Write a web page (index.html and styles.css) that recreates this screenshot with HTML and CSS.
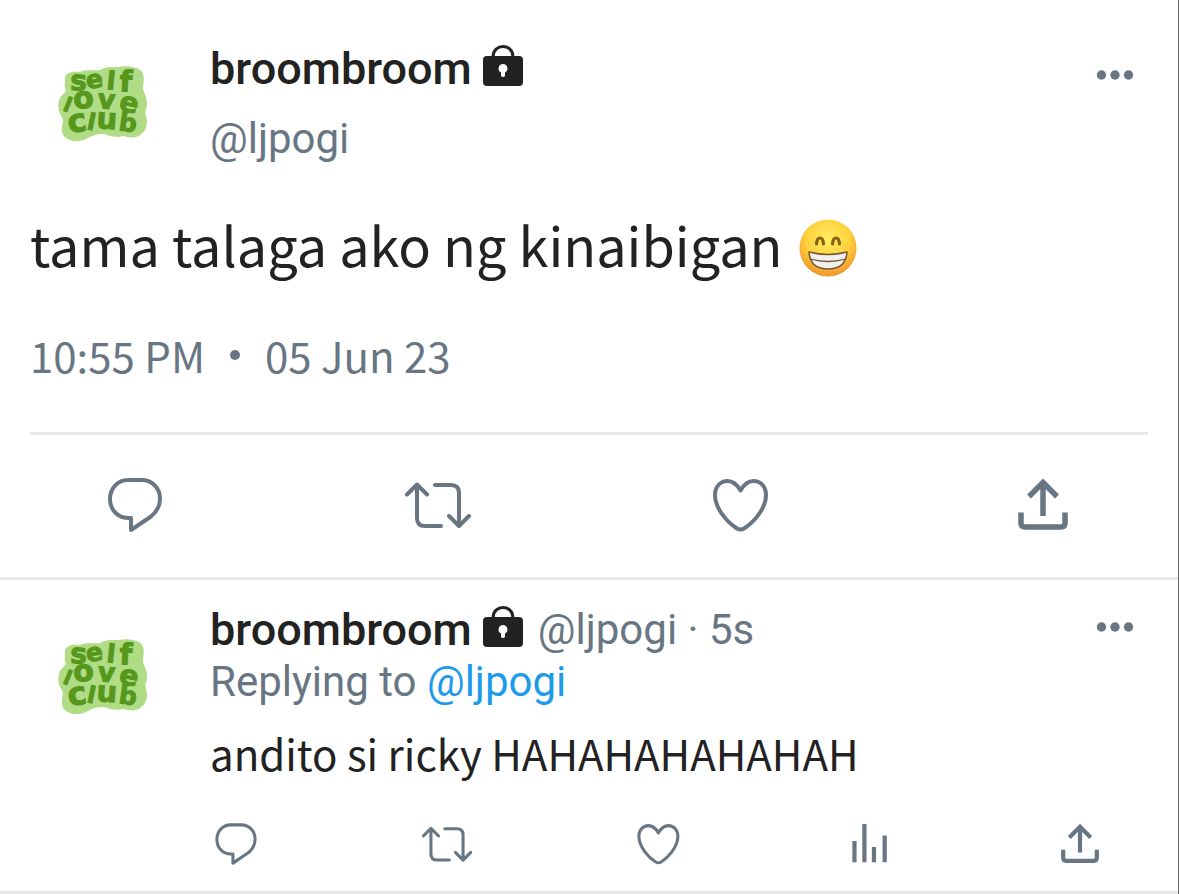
FILE: index.html
```html
<!DOCTYPE html>
<html lang="tl">
<head>
    <meta charset="UTF-8">
    <meta name="viewport" content="width=device-width, initial-scale=1.0">
    <title>broombroom</title>
    <link rel="stylesheet" href="styles.css">
</head>
<body>
    <!-- Shared icons -->
    <svg class="sprite" aria-hidden="true">
        <symbol id="reply" viewBox="0 0 68 60">
            <path d="M27 5H41C51 5 59 13 59 23.5C59 31 55.5 37 50 41.5L30 55V43H27C16.5 43 9 34.5 9 24S16.5 5 27 5Z"/>
        </symbol>
        <symbol id="retweet" viewBox="0 0 68 60">
            <path stroke-linecap="round" d="M3 19.5L13 9.5L23 19.5M13 10V43Q13 51 21 51H37M31 10H47Q55 10 55 18V51M45 41L55 51L65 41"/>
        </symbol>
        <symbol id="heart" viewBox="0 0 68 60">
            <path d="M34.5 15.5C31 9.5 27 6 21.5 6C14 6 9 12 9 20C9 34 22 48 31 53.5Q34.5 55.5 38 53.5C47 48 60 34 60 20C60 12 55 6 47.5 6C42 6 38 9.5 34.5 15.5Z"/>
        </symbol>
        <symbol id="stats" viewBox="0 0 68 60">
            <path stroke-width="5.5" d="M15 26V54M28 4V54M40.5 34V54M54.5 19V54"/>
        </symbol>
        <symbol id="share" viewBox="0 0 68 60">
            <path stroke-width="5.5" stroke-linejoin="miter" d="M20 21.5L34 7.5L48 21.5M34 8V41M12 37.5V48Q12 52 16 52H52Q56 52 56 48V37.5"/>
        </symbol>
        <symbol id="lock" viewBox="0 0 40 42">
            <rect x="0" y="11" width="40" height="30" rx="4"/>
            <path fill="none" stroke="#222" stroke-width="3" d="M10 12C10 -2 30 -2 30 12"/>
            <path fill="#fff" d="M20 19A4.5 4.5 0 0 1 22 27.5V31Q20 33 18 31V27.5A4.5 4.5 0 0 1 20 19Z"/>
        </symbol>
        <symbol id="dots" viewBox="0 0 38 12">
            <circle cx="5.5" cy="6" r="4.7"/>
            <circle cx="19" cy="6" r="4.7"/>
            <circle cx="32.5" cy="6" r="4.7"/>
        </symbol>
        <symbol id="logo" viewBox="0 0 90 76">
            <path fill="#afdc85" d="M7 15C6 6 14 5 22 6C28 3 38 5 42 4C48 0 56 1 61 1C68 -1 77 1 81 3C87 7 86 14 85 20C84 25 89 29 89 38C89 43 86 45 88 50C91 59 87 66 82 69C77 73 70 71 65 70C57 72 51 70 46 68C38 68 33 70 28 73C20 77 10 75 6 70C2 65 5 58 5 53C2 48 -1 44 1 35C2 29 8 27 8 24C6 21 7 18 7 15Z"/>
            <g class="logo-text">
                <text x="12" y="24" rotate="2" font-size="28">s</text>
                <text x="29" y="23" rotate="-8" font-size="25">e</text>
                <text x="48" y="23" rotate="6" font-size="25">l</text>
                <text x="61" y="25" rotate="3" font-size="29">f</text>
                <text x="4" y="44" rotate="22" font-size="20">l</text>
                <text x="16" y="43" rotate="-5" font-size="30">o</text>
                <text x="39" y="42" rotate="5" font-size="27">v</text>
                <text x="60" y="44" rotate="12" font-size="28">e</text>
                <text x="11" y="67" rotate="-8" font-size="32">c</text>
                <text x="28" y="63" rotate="12" font-size="23">l</text>
                <text x="38" y="62" rotate="4" font-size="29">u</text>
                <text x="60" y="64" rotate="8" font-size="25">b</text>
            </g>
        </symbol>
    </svg>

    <main class="page">
        <article class="tweet">
            <header class="tweet-header">
                <svg class="avatar" role="img" aria-label="self love club"><use href="#logo"/></svg>
                <div class="user">
                    <h1 class="name">broombroom <svg class="lock" aria-hidden="true"><use href="#lock"/></svg></h1>
                    <p class="handle">@ljpogi</p>
                </div>
                <button class="more" type="button" aria-label="More"><svg><use href="#dots"/></svg></button>
            </header>
            <p class="tweet-text">tama talaga ako ng kinaibigan
                <svg class="emoji" viewBox="0 0 60 60" role="img" aria-label="grinning face">
                    <defs>
                        <radialGradient id="face" cx="50%" cy="35%" r="65%">
                            <stop offset="0" stop-color="#ffee62"/>
                            <stop offset="0.6" stop-color="#fed03c"/>
                            <stop offset="1" stop-color="#f0932b"/>
                        </radialGradient>
                    </defs>
                    <circle cx="30" cy="30" r="28.5" fill="url(#face)"/>
                    <path fill="none" stroke="#8a6216" stroke-width="3.2" stroke-linecap="round" d="M18.5 26Q19 20 22 20T25.5 26M34.5 26Q35 20 38 20T41.5 26"/>
                    <path fill="#f1f1f1" stroke="#76562b" stroke-width="1.5" stroke-linejoin="round" d="M11 34Q30 39 49 34Q48 51 30 51T11 34Z"/>
                    <path fill="none" stroke="#76562b" stroke-width="1.3" d="M12.5 41Q30 46 47.5 41"/>
                </svg>
            </p>
            <p class="tweet-date"><span>10:55 PM</span><span class="bullet"></span><span>05 Jun 23</span></p>
            <div class="actions">
                <button type="button" aria-label="Reply"><svg><use href="#reply"/></svg></button>
                <button type="button" aria-label="Retweet"><svg><use href="#retweet"/></svg></button>
                <button type="button" aria-label="Like"><svg><use href="#heart"/></svg></button>
                <button type="button" aria-label="Share"><svg><use href="#share"/></svg></button>
            </div>
        </article>

        <article class="reply">
            <svg class="avatar" role="img" aria-label="self love club"><use href="#logo"/></svg>
            <div class="reply-body">
                <div class="reply-top">
                    <h2 class="name">broombroom <svg class="lock" aria-hidden="true"><use href="#lock"/></svg></h2>
                    <span class="handle">@ljpogi · 5s</span>
                    <button class="more" type="button" aria-label="More"><svg><use href="#dots"/></svg></button>
                </div>
                <p class="replying">Replying to <a href="#">@ljpogi</a></p>
                <p class="reply-text">andito si ricky HAHAHAHAHAHAH</p>
                <div class="actions actions-small">
                    <button type="button" aria-label="Reply"><svg><use href="#reply"/></svg></button>
                    <button type="button" aria-label="Retweet"><svg><use href="#retweet"/></svg></button>
                    <button type="button" aria-label="Like"><svg><use href="#heart"/></svg></button>
                    <button type="button" aria-label="Stats"><svg><use href="#stats"/></svg></button>
                    <button type="button" aria-label="Share"><svg><use href="#share"/></svg></button>
                </div>
            </div>
        </article>
    </main>
</body>
</html>
```

FILE: styles.css
```css
* {
    box-sizing: border-box;
}

body {
    margin: 0;
    background: #fff;
    color: #222;
    font-family: Roboto, sans-serif;
}

h1, h2, p {
    margin: 0;
}

button {
    display: flex;
    padding: 0;
    border: none;
    background: none;
    cursor: pointer;
}

.sprite {
    display: none;
}

.page {
    min-height: 100vh;
    border-right: 1px solid #666;
}

.avatar {
    flex: none;
    width: 90px;
    height: 76px;
    margin: 0 62px 0 28px;
}

.logo-text {
    fill: #55981c;
    stroke: #55981c;
    stroke-width: 1px;
    font-family: "DejaVu Sans", sans-serif;
    font-weight: 700;
}

.tweet {
    padding-top: 44px;
    border-bottom: 3px solid #e8e8e8;
}

.tweet-header {
    display: flex;
    align-items: flex-start;
    padding: 0 44px 0 30px;
}

.tweet-header .avatar {
    margin-top: 22px;
}

.user {
    flex: 1;
}

.name {
    display: flex;
    align-items: center;
    gap: 11px;
    font-size: 45px;
    font-weight: 500;
    line-height: 50px;
}

.lock {
    width: 40px;
    height: 42px;
    margin-bottom: 7px;
    fill: #222;
}

.handle {
    color: #687684;
    font-size: 42px;
    line-height: 50px;
}

.user .handle {
    margin-top: 20px;
}

.more svg {
    width: 38px;
    height: 12px;
    fill: #687684;
}

.tweet-header .more {
    margin-top: 25px;
}

.tweet-text {
    display: flex;
    align-items: flex-start;
    gap: 15px;
    padding: 0 30px;
    margin-top: 44px;
    font-family: "Noto Sans CJK SC", sans-serif;
    font-size: 54px;
    line-height: 72px;
}

.emoji {
    width: 60px;
    height: 60px;
    margin-top: 10px;
}

.tweet-date {
    display: flex;
    align-items: center;
    gap: 25px;
    margin: 45px 30px 0;
    padding-bottom: 47px;
    border-bottom: 3px solid #e8e8e8;
    color: #687684;
    font-family: "Noto Sans CJK SC", sans-serif;
    font-size: 42px;
    line-height: 60px;
}

.bullet {
    width: 10px;
    height: 10px;
    border-radius: 50%;
    background: #687684;
}

.actions {
    display: flex;
    justify-content: space-between;
    padding: 40px 101px 42px;
}

.actions svg {
    width: 68px;
    height: 60px;
    fill: none;
    stroke: #687684;
    stroke-width: 4px;
    stroke-linejoin: round;
}

.reply {
    display: flex;
    padding: 25px 44px 0 30px;
    border-bottom: 3px solid #e8e8e8;
}

.reply > .avatar {
    margin-top: 34px;
}

.reply-body {
    flex: 1;
}

.reply-top {
    display: flex;
    align-items: center;
    gap: 15px;
}

.reply-top .more {
    align-self: flex-start;
    margin: 16px 0 0 auto;
}

.replying {
    margin-top: 2px;
    color: #687684;
    font-size: 42px;
    line-height: 50px;
}

.replying a {
    color: #1d9bea;
    text-decoration: none;
}

.reply-text {
    margin-top: 16px;
    font-family: "Noto Sans CJK SC", sans-serif;
    font-size: 42px;
    line-height: 60px;
}

.actions-small {
    padding: 38px 28px 24px 0;
}

.actions-small svg {
    width: 52px;
    height: 46px;
}
```
